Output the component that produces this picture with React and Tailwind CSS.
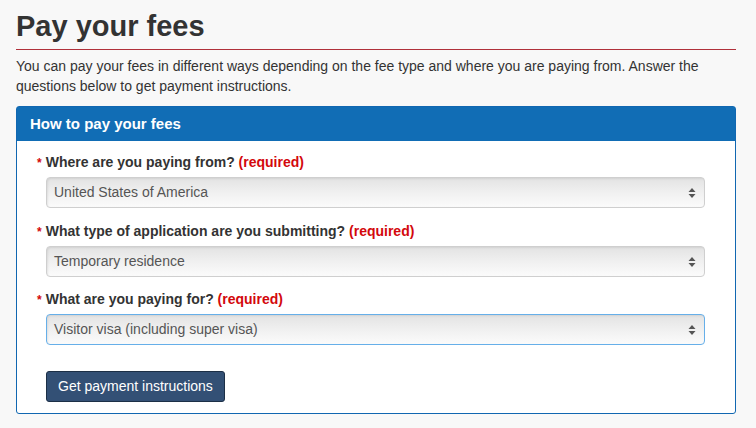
import React from 'react';

const FONT = { fontFamily: '"Liberation Sans", Arial, Helvetica, sans-serif' };

const questions = [
  { label: 'Where are you paying from?', value: 'United States of America', gap: '' },
  { label: 'What type of application are you submitting?', value: 'Temporary residence', gap: 'mt-[14px]' },
  { label: 'What are you paying for?', value: 'Visitor visa (including super visa)', gap: 'mt-[13px]', focused: true },
];

const Arrows = () => (
  <svg width="8" height="12" viewBox="0 0 8 12" className="shrink-0">
    <path d="M4 1 L7.5 5 L0.5 5 Z" fill="#555" />
    <path d="M4 11 L7.5 7 L0.5 7 Z" fill="#555" />
  </svg>
);

const FakeSelect = ({ value, focused }) => (
  <div
    className={
      'h-[31px] flex items-center justify-between pl-[7px] pr-[8px] rounded-[4px] border bg-gradient-to-b from-[#e3e3e3] via-[#f0f0f0] to-[#fbfbfb] text-[14px] text-[#555] shadow-[inset_1px_1px_2px_rgba(0,0,0,0.08)] ' +
      (focused ? 'border-[#66afe9] shadow-[0_0_2px_rgba(102,175,233,0.6)]' : 'border-[#cfcfcf]')
    }
  >
    <span>{value}</span>
    <Arrows />
  </div>
);

export default function App() {
  return (
    <div className="min-h-[428px] bg-[#f8f8f8] pl-4 pr-5 text-[#333]" style={FONT}>
      <h1 className="pt-[8px] pb-[5px] text-[29px] leading-[36px] font-bold border-b border-[#b0303a]">
        Pay your fees
      </h1>
      <p className="mt-[6px] text-[14px] leading-[20px] pr-2">
        You can pay your fees in different ways depending on the fee type and where you are paying from. Answer the
        questions below to get payment instructions.
      </p>

      <div className="mt-[10px] border border-[#1167b1] rounded-[3px] bg-white">
        <div className="h-[34px] bg-[#116db5] flex items-center px-[13px] text-white text-[15px] font-bold">
          How to pay your fees
        </div>
        <div className="pl-[29px] pr-[30px] pt-[12px] pb-[11px]">
          {questions.map((q, i) => (
            <div key={i} className={q.gap}>
              <div className="-ml-[9px] h-[18px] text-[14px] leading-[18px] font-bold mb-[6px]">
                <span className="text-[#d3080c] text-[12px] leading-none mr-[4px]">*</span>
                {q.label} <span className="text-[#d3080c]">(required)</span>
              </div>
              <FakeSelect value={q.value} focused={q.focused} />
            </div>
          ))}
          <button className="mt-[26px] h-[31px] px-[11px] bg-[#335075] border border-[#1c2f46] rounded-[3px] text-white text-[14px]">
            Get payment instructions
          </button>
        </div>
      </div>
    </div>
  );
}
